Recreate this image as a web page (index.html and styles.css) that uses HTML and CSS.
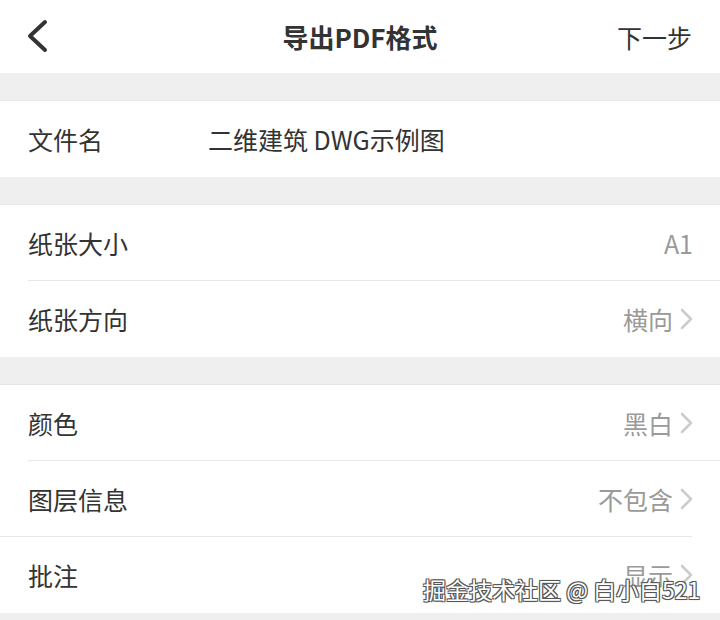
FILE: index.html
```html
<!DOCTYPE html>
<html lang="zh">
<head>
<meta charset="utf-8">
<link rel="stylesheet" href="styles.css">
</head>
<body>
<div class="page">
  <header class="nav">
    <svg class="back" width="24" height="34" viewBox="0 0 24 34"><path d="M19 3 L4 17 L19 31" fill="none" stroke="#333" stroke-width="4" stroke-linecap="round" stroke-linejoin="round"/></svg>
    <div class="title">导出PDF格式</div>
    <div class="next">下一步</div>
  </header>
  <div class="gap"></div>
  <section class="group">
    <div class="row">
      <span class="label fixed">文件名</span>
      <span class="name">二维建筑 DWG示例图</span>
    </div>
  </section>
  <div class="gap"></div>
  <section class="group">
    <div class="row sep">
      <span class="label">纸张大小</span>
      <span class="value">A1</span>
    </div>
    <div class="row">
      <span class="label">纸张方向</span>
      <span class="value">横向<svg class="chev" width="14" height="22" viewBox="0 0 14 22"><path d="M3 2 L12 11 L3 20" fill="none" stroke="#cccccc" stroke-width="2.6" stroke-linecap="round" stroke-linejoin="round"/></svg></span>
    </div>
  </section>
  <div class="gap"></div>
  <section class="group">
    <div class="row sep">
      <span class="label">颜色</span>
      <span class="value">黑白<svg class="chev" width="14" height="22" viewBox="0 0 14 22"><path d="M3 2 L12 11 L3 20" fill="none" stroke="#cccccc" stroke-width="2.6" stroke-linecap="round" stroke-linejoin="round"/></svg></span>
    </div>
    <div class="row sep-full">
      <span class="label">图层信息</span>
      <span class="value">不包含<svg class="chev" width="14" height="22" viewBox="0 0 14 22"><path d="M3 2 L12 11 L3 20" fill="none" stroke="#cccccc" stroke-width="2.6" stroke-linecap="round" stroke-linejoin="round"/></svg></span>
    </div>
    <div class="row">
      <span class="label">批注</span>
      <span class="value">显示<svg class="chev" width="14" height="22" viewBox="0 0 14 22"><path d="M3 2 L12 11 L3 20" fill="none" stroke="#cccccc" stroke-width="2.6" stroke-linecap="round" stroke-linejoin="round"/></svg></span>
    </div>
  </section>
  <div class="gap tail"></div>
  <div class="watermark">掘金技术社区 @ 白小白521</div>
</div>
</body>
</html>
```
FILE: styles.css
```css
* { box-sizing: border-box; }
html, body { margin: 0; padding: 0; }
body {
  width: 720px;
  height: 620px;
  overflow: hidden;
  background: #efeff0;
  font-family: "Noto Sans CJK SC", "Noto Sans", sans-serif;
  color: #333;
}
.page { position: relative; width: 720px; height: 620px; }
.nav {
  height: 73px;
  background: #fff;
  display: flex;
  align-items: center;
  justify-content: space-between;
  padding: 0 28px 0 26px;
  position: relative;
}
.back { display: block; margin-top: -1px; }
.title {
  position: absolute;
  left: 0; right: 0;
  text-align: center;
  font-size: 26px;
  font-weight: 700;
  color: #333;
  pointer-events: none;
}
.next { font-size: 25px; color: #333; }
.gap { height: 28px; background: #efeff0; border-bottom: 1px solid #e6e6e6; }
.tail { border-bottom: none; height: 8px; }
.group { background: #fff; }
.row {
  height: 76px;
  display: flex;
  align-items: center;
  justify-content: space-between;
  padding: 0 27px 0 28px;
  position: relative;
  font-size: 25px;
}
.row.sep::after {
  content: "";
  position: absolute;
  left: 28px; right: 0; bottom: 0;
  height: 1px;
  background: #e8e8e8;
}
.row.sep-full::after {
  content: "";
  position: absolute;
  left: 0; right: 28px; bottom: 0;
  height: 1px;
  background: #e8e8e8;
}
.label { color: #333; }
.fixed { width: 180px; flex: none; }
.name { flex: 1; color: #333; }
.value {
  color: #9a9a9a;
  display: flex;
  align-items: center;
}
.chev { margin-left: 6px; display: block; }
.watermark {
  position: absolute;
  left: 423px;
  top: 572px;
  font-size: 23px;
  color: #fff;
  white-space: nowrap;
  text-shadow: 1px 1px 0 #555, -1px -1px 0 #555, 1px -1px 0 #555, -1px 1px 0 #555, 0 0 2px #333;
}
```
